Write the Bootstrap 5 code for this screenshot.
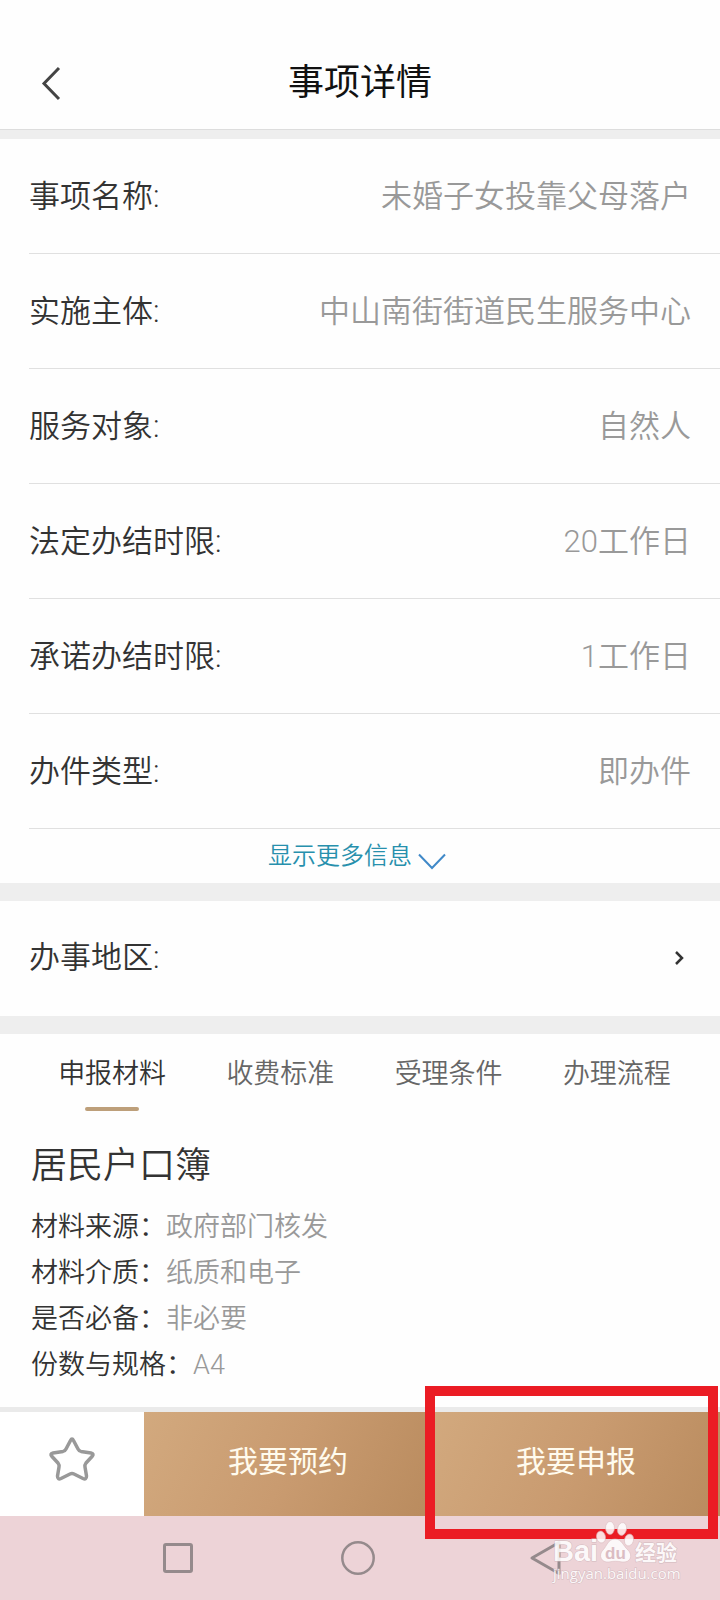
<!DOCTYPE html>
<html lang="zh-CN">
<head>
<meta charset="utf-8">
<meta name="viewport" content="width=device-width, initial-scale=1">
<title>事项详情</title>
<link rel="stylesheet" href="https://cdn.jsdelivr.net/npm/bootstrap@5.3.0/dist/css/bootstrap.min.css">
<style>
  body { font-family: Roboto, "Noto Sans CJK SC", sans-serif; font-weight: 350; color: #333; background: #fefefe; }
  svg { display: block; fill: none; }
  .topbar { display: grid; grid-template-columns: 60px 1fr 60px; align-items: center; padding: 38px 20px 0; height: 130px; border-bottom: 1px solid #ddd; }
  .topbar h1 { font-size: 36px; font-weight: 400; color: #111; }
  .band { background: #eee; height: 18px; }
  .band-sm { height: 9px; }
  .info-row { min-height: 115px; margin-left: 29px; padding: 2px 29px 0 0; font-size: 31px; line-height: 40px; border-bottom: 1px solid #e0e0e0; }
  .info-row dt { font-weight: 350; }
  .info-row dd, .materials dd { color: #999; }
  .more { height: 54px; font-size: 24px; line-height: 32px; color: #2790ad; font-weight: 350; }
  .region { min-height: 115px; padding: 0 29px; font-size: 31px; color: #333; font-weight: 350; }
  .tabs { padding: 12px 19px 0 28px; }
  .tabs .nav-link { position: relative; padding: 8px 0 26px; font-size: 27px; line-height: 40px; color: #666; }
  .tabs .nav-link.active { color: #333; }
  .tabs .nav-link.active::after { content: ""; position: absolute; left: 50%; bottom: 9px; width: 54px; height: 4px; margin-left: -27px; border-radius: 2px; background: #bd9f7a; }
  .materials { padding: 22px 31px 19px; }
  .materials h2 { font-size: 36px; line-height: 48px; font-weight: 350; margin-bottom: 14px; }
  .materials dl { font-size: 27px; line-height: 46px; }
  .materials dt { font-weight: 350; }
  .actions { border-top: 5px solid #eaeaea; height: 109px; }
  .actions .btn { padding: 0 0 6px; }
  .fav { width: 20%; }
  .gold { font-size: 30px; color: #fffbee; border-radius: 0; background: linear-gradient(115deg, #d2a97e, #c99b70 50%, #b98b5e); }
  .callout-frame { left: 59%; right: 2px; top: -26px; height: 153px; border: 10px solid #eb1c24; pointer-events: none; }
  .sysnav { background: #edd3d7; height: 84px; padding: 0 12%; }
  .wm { right: 36px; bottom: 9px; width: 132px; height: 74px; pointer-events: none; }
  .wm text { fill: #fff; stroke: #cdb5ba; stroke-width: 1; paint-order: stroke; }
</style>
</head>
<body>
<header class="topbar">
  <button class="btn p-0 border-0" type="button" aria-label="返回">
    <svg width="44" height="40" viewBox="0 0 44 40" stroke="#444" stroke-width="3"><path d="M39 4 24 19.500 39 35"/></svg>
  </button>
  <h1 class="text-center mb-0">事项详情</h1>
</header>
<main>
  <div class="band band-sm"></div>
  <dl class="mb-0">
    <div class="info-row d-flex align-items-center justify-content-between"><dt>事项名称:</dt><dd class="mb-0">未婚子女投靠父母落户</dd></div>
    <div class="info-row d-flex align-items-center justify-content-between"><dt>实施主体:</dt><dd class="mb-0">中山南街街道民生服务中心</dd></div>
    <div class="info-row d-flex align-items-center justify-content-between"><dt>服务对象:</dt><dd class="mb-0">自然人</dd></div>
    <div class="info-row d-flex align-items-center justify-content-between"><dt>法定办结时限:</dt><dd class="mb-0">20工作日</dd></div>
    <div class="info-row d-flex align-items-center justify-content-between"><dt>承诺办结时限:</dt><dd class="mb-0">1工作日</dd></div>
    <div class="info-row d-flex align-items-center justify-content-between"><dt>办件类型:</dt><dd class="mb-0">即办件</dd></div>
  </dl>
  <button class="more btn border-0 rounded-0 w-100 py-0 ps-0 pe-1 d-flex justify-content-center align-items-center gap-1" type="button">
    <span>显示更多信息</span>
    <svg width="32" height="32" viewBox="0 0 32 32" stroke="#4089c8" stroke-width="2"><path d="M3 14.500 16 28 29 14.500"/></svg>
  </button>
  <div class="band"></div>
  <button class="region btn border-0 rounded-0 w-100 d-flex align-items-center justify-content-between" type="button">
    <span>办事地区:</span>
    <svg width="20" height="20" viewBox="0 0 20 20" stroke="#333" stroke-width="2.500"><path d="m5 3 6 6-6 6"/></svg>
  </button>
  <div class="band"></div>
  <nav class="tabs nav nav-justified flex-nowrap">
    <a class="nav-link active" href="#materials" aria-current="page">申报材料</a>
    <a class="nav-link" href="#fees">收费标准</a>
    <a class="nav-link" href="#conditions">受理条件</a>
    <a class="nav-link" href="#process">办理流程</a>
  </nav>
  <section class="materials" id="materials">
    <h2>居民户口簿</h2>
    <dl class="mb-0">
      <div class="d-flex"><dt>材料来源：</dt><dd class="mb-0">政府部门核发</dd></div>
      <div class="d-flex"><dt>材料介质：</dt><dd class="mb-0">纸质和电子</dd></div>
      <div class="d-flex"><dt>是否必备：</dt><dd class="mb-0">非必要</dd></div>
      <div class="d-flex"><dt>份数与规格：</dt><dd class="mb-0">A4</dd></div>
    </dl>
  </section>
</main>
<footer class="position-relative">
  <div class="actions d-flex position-relative">
    <button class="fav btn border-0 rounded-0 bg-white d-flex align-items-center justify-content-center" type="button" aria-label="收藏">
      <svg width="50" height="50" viewBox="0 0 50 50" stroke="#999" stroke-width="3.500" stroke-linejoin="round"><path d="M23.500 4.500Q25 1.500 26.500 4.500L31 13Q32 15 34 15.400L44 17Q47.500 17.700 45 20.500L39 27Q37.500 29 38 31L39.500 40Q39.500 44 36 42.500L27 38Q25 37 23 38L14 42.500Q10.500 44 10.500 40L12 31Q12.500 29 11 27L5 20.500Q2.500 17.700 6 17L16 15.400Q18 15 19 13Z"/></svg>
    </button>
    <button class="gold btn border-0 flex-fill" type="button">我要预约</button>
    <button class="gold btn border-0 flex-fill" type="button">我要申报</button>
    <div class="callout-frame position-absolute"></div>
  </div>
  <div class="sysnav d-flex align-items-center justify-content-around">
    <button class="btn p-0 border-0" type="button" aria-label="最近任务"><svg width="36" height="36" viewBox="0 0 36 36" stroke="#958a8c" stroke-width="3"><rect x="5.500" y="4.500" width="27" height="27" rx="1.500"/></svg></button>
    <button class="btn p-0 border-0" type="button" aria-label="主屏幕"><svg width="36" height="36" viewBox="0 0 36 36" stroke="#958a8c" stroke-width="2.500"><circle cx="18" cy="18" r="15.700"/></svg></button>
    <button class="btn p-0 border-0" type="button" aria-label="返回上一页"><svg width="40" height="36" viewBox="0 0 40 36" stroke="#958a8c" stroke-width="3" stroke-linejoin="round"><path d="M38 2.500V33.500L11 18Z"/></svg></button>
  </div>
  <svg class="wm position-absolute" viewBox="0 0 132 74" role="img" aria-label="Baidu经验">
    <g opacity=".85">
      <text x="1" y="44" font-family="Liberation Sans, sans-serif" font-weight="700" font-size="29">Bai</text>
      <g fill="#fff" stroke="#d9b9be" stroke-width=".6">
        <ellipse cx="58" cy="11" rx="4.500" ry="6.500"/><ellipse cx="70" cy="12" rx="4.500" ry="6.500" transform="rotate(12 70 12)"/>
        <ellipse cx="49" cy="20" rx="4.500" ry="6" transform="rotate(-12 49 20)"/><ellipse cx="77" cy="23" rx="4.500" ry="6" transform="rotate(15 77 23)"/>
        <path d="M63 22C56 22 55 29 51 33 46 38 49 46 57 45 61 44 66 44 70 45 79 46 81 38 76 33 71 29 70 22 63 22Z"/>
      </g>
      <text x="53" y="42" font-family="Liberation Sans, sans-serif" font-weight="700" font-size="17" style="fill:#d8b9bf;stroke:none">du</text>
      <text x="83" y="43" font-family="Noto Sans CJK SC, sans-serif" font-weight="700" font-size="21">经验</text>
      <text x="1" y="62" font-family="Open Sans, sans-serif" font-weight="400" font-size="15">jingyan.baidu.com</text>
    </g>
  </svg>
</footer>
<script src="https://cdn.jsdelivr.net/npm/bootstrap@5.3.0/dist/js/bootstrap.bundle.min.js"></script>
</body>
</html>
